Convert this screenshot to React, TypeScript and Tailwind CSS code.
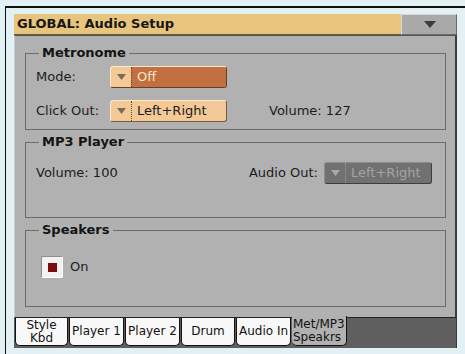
import React from "react";

function Tri({ color }: { color: string }) {
  return (
    <svg width="9" height="6" viewBox="0 0 9 6">
      <polygon points="0,0 9,0 4.5,6" fill={color} />
    </svg>
  );
}

function DropNormal({ value }: { value: string }) {
  return (
    <div className="flex h-[22px] w-[117px] rounded-[3px] border border-t-[#fde8cc] border-l-[#fde8cc] border-b-[#7a5a3c] border-r-[#7a5a3c] bg-[#f3c998]">
      <div className="flex w-[20px] items-center justify-center">
        <Tri color="#7f6a5a" />
      </div>
      <div className="flex flex-1 items-center border-l border-dotted border-[#6b4a2a] pl-[5px] text-[13px] text-[#1c1c1c]">
        {value}
      </div>
    </div>
  );
}

function DropSelected({ value }: { value: string }) {
  return (
    <div className="flex h-[22px] w-[117px] overflow-hidden rounded-[3px] border border-t-[#fde8cc] border-l-[#fde8cc] border-b-[#6a4022] border-r-[#6a4022] bg-[#f3c998]">
      <div className="flex w-[20px] items-center justify-center">
        <Tri color="#7f6a5a" />
      </div>
      <div className="flex flex-1 items-center border-l border-dotted border-[#6b4a2a] bg-[#c2703f] pl-[5px] text-[13px] text-[#fbe6d2]">
        {value}
      </div>
    </div>
  );
}

function DropDisabled({ value }: { value: string }) {
  return (
    <div className="flex h-[22px] w-[108px] rounded-[3px] border border-t-[#8c8c8c] border-l-[#8c8c8c] border-b-[#3e3e3e] border-r-[#3e3e3e] bg-[#717171]">
      <div className="flex w-[20px] items-center justify-center">
        <Tri color="#a9a9a9" />
      </div>
      <div className="flex flex-1 items-center border-l border-dotted border-[#9c9c9c] pl-[5px] text-[13px] text-[#a3a3a3]">
        {value}
      </div>
    </div>
  );
}

function Group({
  title,
  h,
  children,
}: {
  title: string;
  h: string;
  children: React.ReactNode;
}) {
  return (
    <fieldset className={`${h} border border-[#6c6c6c]`}>
      <legend className="ml-[13px] px-[3px] text-[13px] font-bold leading-[16px] text-[#141414]">
        {title}
      </legend>
      {children}
    </fieldset>
  );
}

function Tab({ w, children }: { w: string; children: React.ReactNode }) {
  return (
    <div
      className={`${w} flex h-[28px] flex-col items-center justify-center rounded-b-[5px] border border-t-0 border-[#111] bg-[#f8f8f8] text-center text-[12px] leading-[13px] text-[#111]`}
    >
      {children}
    </div>
  );
}

export default function App() {
  return (
    <div
      className="h-[354px] w-[465px] overflow-hidden bg-[#e3f0f4] pl-[5px] pt-[6px]"
      style={{ fontFamily: '"DejaVu Sans", "Liberation Sans", sans-serif' }}
    >
      <div className="h-full border-l border-t-2 border-[#111] pl-[8px] pt-[6px]">
        <div className="flex w-[443px] flex-col">
          {/* Title row */}
          <div className="flex h-[21px]">
            <div className="flex w-[387px] items-center border-b border-[#6a5a3a] bg-[#e8c47c] pl-[3px] text-[13px] font-bold text-[#161616]">
              GLOBAL: Audio Setup
            </div>
            <div className="flex flex-1 items-center justify-center border-b border-l border-r border-t border-b-[#6a6a6a] border-l-[#d6d6d6] border-r-[#6a6a6a] border-t-[#dadada] bg-[#a9a9a9] pl-[2px]">
              <svg width="12" height="7" viewBox="0 0 12 7">
                <polygon points="0,0 12,0 6,7" fill="#3c3c3c" />
              </svg>
            </div>
          </div>

          {/* Main panel */}
          <div className="flex h-[283px] flex-col border-b border-l border-r-2 border-t border-b-[#222] border-l-[#cfcfcf] border-r-[#3c3c3c] border-t-[#555] bg-[#b1b1b1] pl-[10px] pr-[9px] pt-[9px]">
            <Group title="Metronome" h="h-[85px]">
              <div className="flex flex-col gap-[12px] pl-[10px] pt-[5px]">
                <div className="flex items-center">
                  <div className="w-[74px] text-[13px] text-[#1c1c1c]">Mode:</div>
                  <DropSelected value="Off" />
                </div>
                <div className="flex items-center">
                  <div className="w-[74px] text-[13px] text-[#1c1c1c]">Click Out:</div>
                  <DropNormal value="Left+Right" />
                  <div className="ml-[42px] text-[13px] text-[#1c1c1c]">Volume: 127</div>
                </div>
              </div>
            </Group>

            <div className="h-[4px]" />

            <Group title="MP3 Player" h="h-[84px]">
              <div className="flex items-center pl-[10px] pr-[13px] pt-[12px]">
                <div className="text-[13px] text-[#1c1c1c]">Volume: 100</div>
                <div className="flex-1" />
                <div className="mr-[6px] text-[13px] text-[#1c1c1c]">Audio Out:</div>
                <DropDisabled value="Left+Right" />
              </div>
            </Group>

            <div className="h-[4px]" />

            <Group title="Speakers" h="h-[85px]">
              <div className="flex items-center gap-[7px] pl-[15px] pt-[18px]">
                <div className="flex h-[22px] w-[22px] items-center justify-center rounded-[2px] border border-b-[#ffffff] border-l-[#8e8e8e] border-r-[#ffffff] border-t-[#8e8e8e] bg-[#f3f1f1]">
                  <div className="h-[9px] w-[9px] bg-[#7d0b0b]" />
                </div>
                <div className="text-[13px] text-[#1c1c1c]">On</div>
              </div>
            </Group>
          </div>

          {/* Tab strip */}
          <div className="flex h-[30px] gap-[1px] border-r border-[#3a3a3a] bg-[#5f5f5f] pl-[1px]">
            <Tab w="w-[53px]">
              <span>Style</span>
              <span>Kbd</span>
            </Tab>
            <Tab w="w-[55px]">Player 1</Tab>
            <Tab w="w-[55px]">Player 2</Tab>
            <Tab w="w-[54px]">Drum</Tab>
            <Tab w="w-[55px]">Audio In</Tab>
            <div className="-mt-[2px] flex h-[30px] w-[55px] flex-col justify-center rounded-b-[5px] border-b border-r border-[#111] bg-[#b1b1b1] pl-[1px] text-[12px] leading-[13px] text-[#111]">
              <span>Met/MP3</span>
              <span>Speakrs</span>
            </div>
          </div>
        </div>
      </div>
    </div>
  );
}
